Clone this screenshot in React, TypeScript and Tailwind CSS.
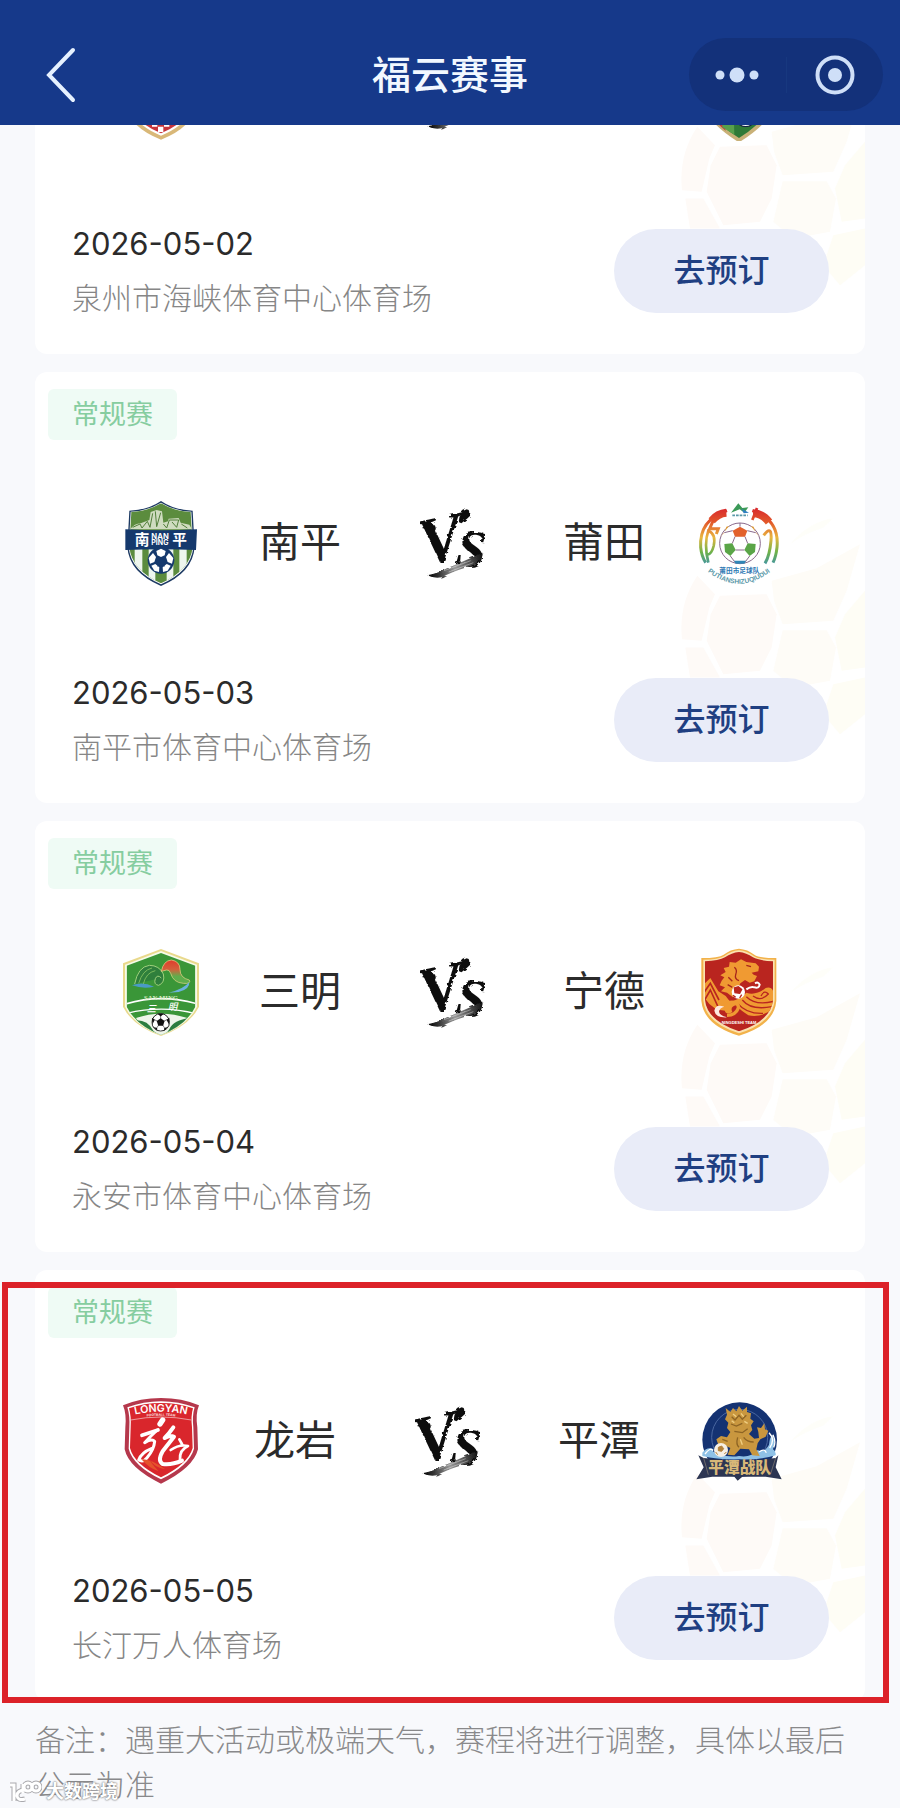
import React from 'react'
import { clsx } from 'clsx'

interface Team {
  name: string
  Logo: () => React.ReactElement
}

interface Match {
  date: string
  venue: string
  home: Team
  away: Team
  highlighted?: boolean
}

const matches: Match[] = [
  {
    date: '2026-05-02',
    venue: '泉州市海峡体育中心体育场',
    home: { name: '泉州', Logo: QuanzhouLogo },
    away: { name: '漳州', Logo: ZhangzhouLogo },
  },
  {
    date: '2026-05-03',
    venue: '南平市体育中心体育场',
    home: { name: '南平', Logo: NanpingLogo },
    away: { name: '莆田', Logo: PutianLogo },
  },
  {
    date: '2026-05-04',
    venue: '永安市体育中心体育场',
    home: { name: '三明', Logo: SanmingLogo },
    away: { name: '宁德', Logo: NingdeLogo },
  },
  {
    date: '2026-05-05',
    venue: '长汀万人体育场',
    home: { name: '龙岩', Logo: LongyanLogo },
    away: { name: '平潭', Logo: PingtanLogo },
    highlighted: true,
  },
]

export default function App() {
  return (
    <div className="relative min-h-screen bg-[#f8f9fc] font-['Inter','Noto_Sans_CJK_SC',sans-serif]">
      <Header />

      <main className="overflow-hidden px-[35px]">
        {/* List is scrolled, the first card sits partly under the header */}
        <div className="-mt-[202px] flex flex-col gap-[18px]">
          {matches.map((match) => (
            <MatchCard key={match.date} match={match} />
          ))}
        </div>
        <p className="pt-[17px] text-[30px] leading-[45px] font-light text-[#89898b]">
          备注：遇重大活动或极端天气，赛程将进行调整，具体以最后公示为准
        </p>
      </main>

      <Watermark />
    </div>
  )
}

// ── Header ──

function Header() {
  return (
    <header className="grid h-[125px] grid-cols-[1fr_auto_1fr] items-center bg-[#16398a] px-[17px] pt-6">
      <button type="button" aria-label="返回" className="ml-[25px] w-9">
        <svg viewBox="0 0 36 56" className="h-14 w-9" fill="none" stroke="#e6f1ff" strokeWidth="4">
          <path d="M31 3 7 28l24 25" strokeLinecap="round" />
        </svg>
      </button>
      <h1 className="text-[39px] leading-[50px] font-medium text-[#f2f8ff]">福云赛事</h1>
      <div className="flex h-[73px] w-[194px] items-center justify-self-end rounded-full bg-[#13317a]">
        <button type="button" aria-label="更多" className="flex h-9 flex-1 items-center justify-center border-r border-[#17387f]">
          <svg viewBox="0 0 48 20" className="h-5 w-12" fill="#cfdff8">
            <circle cx="7" cy="10" r="4.5" />
            <circle cx="24" cy="10" r="7.5" />
            <circle cx="41" cy="10" r="4.5" />
          </svg>
        </button>
        <button type="button" aria-label="关闭" className="flex flex-1 items-center justify-center">
          <svg viewBox="0 0 40 40" className="h-10 w-10">
            <circle cx="20" cy="20" r="17.5" fill="none" stroke="#cfdff8" strokeWidth="4" />
            <circle cx="20" cy="20" r="7" fill="#cfdff8" />
          </svg>
        </button>
      </div>
    </header>
  )
}

// ── Match card ──

function MatchCard({ match }: { match: Match }) {
  const { home, away } = match

  return (
    <article className="relative rounded-xl bg-white pb-[38px]">
      <BallPattern />

      <div className="relative pt-[17px] pl-[13px]">
        <span className="inline-flex h-[51px] items-center rounded-md bg-[#effbf5] px-6 pt-0.5 align-top text-[27px] text-[#86cda0]">
          常规赛
        </span>
      </div>

      <div className="relative mt-[57px] flex items-center px-[83px]">
        <home.Logo />
        <div
          className={clsx(
            'flex flex-1 items-center justify-between text-[41px] leading-[50px] text-[#2b2b2b]',
            match.highlighted ? 'pr-[56px] pl-[50px]' : 'pr-[51px] pl-[55px]'
          )}
        >
          <span className="pb-1">{home.name}</span>
          <VersusMark />
          <span className="pb-1">{away.name}</span>
        </div>
        <away.Logo />
      </div>

      <div className="relative mt-[85px] flex items-center justify-between pr-[36px] pl-[37px]">
        <div>
          <p className="text-[31px] leading-9 text-[#2b2b2b]">{match.date}</p>
          <p className="mt-[18px] text-[30px] leading-9 font-light text-[#868686]">{match.venue}</p>
        </div>
        <button
          type="button"
          className="h-[84px] w-[215px] rounded-full bg-[#e9ecf8] text-[32px] font-medium text-[#1f3f82]"
        >
          去预订
        </button>
      </div>

      {match.highlighted && (
        <div className="pointer-events-none absolute top-3 -right-6 -bottom-0.5 -left-[33px] border-[6px] border-[#dc2229]" />
      )}
    </article>
  )
}

function BallPattern() {
  return (
    <svg viewBox="60 100 555 740" className="absolute top-[142px] right-0 h-[247px] w-[185px]" aria-hidden="true">
      <g fill="#fefaf7">
        <path d="M112 285Q55 370 66 475L125 480 148 380 165 340Z" />
        <path d="M180 345 320 340 350 400 335 500 300 570 190 580 140 480 152 400Z" />
        <path d="M76 500 130 500 180 590 90 590Z" />
      </g>
      <g fill="#fefcf7">
        <path d="M335 300 470 262 600 190 560 330 520 420 368 430 342 360Z" />
        <path d="M368 448 500 448 528 500 510 600 400 620 340 570Z" />
      </g>
      <g fill="#fefdf5">
        <path d="M555 400 615 330 615 560 545 570 525 470Z" />
        <path d="M520 610 615 590 615 700 540 760 490 700Z" />
        <path d="M390 190Q450 120 520 112L490 140Q430 160 390 190Z" opacity=".6" />
      </g>
    </svg>
  )
}

function VersusMark() {
  return (
    <svg viewBox="60 80 195 225" className="h-[75px] w-[65px]" role="img" aria-label="VS">
      <defs>
        <filter id="ink" x="-10%" y="-10%" width="120%" height="120%">
          <feTurbulence type="fractalNoise" baseFrequency="0.05 0.1" numOctaves="2" seed="4" />
          <feDisplacementMap in="SourceGraphic" scale="12" />
        </filter>
        <linearGradient id="inkFade" x1="1" x2="0">
          <stop offset="0" stopColor="#111" />
          <stop offset=".5" stopColor="#999" />
          <stop offset=".8" stopColor="#333" />
          <stop offset="1" stopColor="#000" />
        </linearGradient>
      </defs>
      <g filter="url(#ink)" fill="#111">
        <text fontFamily="Liberation Serif, serif" fontWeight="700" fontStyle="italic">
          <tspan x="70" y="258" rotate="-12" fontSize="200">
            V
          </tspan>
          <tspan x="164" y="258" rotate="6" fontSize="160">
            S
          </tspan>
        </text>
        {/* brush tips and the tail under the mark */}
        <path d="M176 128Q178 96 200 90 214 92 210 110 200 120 184 132Z" />
        <path d="M66 146Q78 134 104 138 116 150 106 160 84 150 66 146Z" />
        <path d="M248 220Q250 248 200 264 150 280 126 294 100 298 82 288 116 282 142 266 190 246 248 220Z" fill="url(#inkFade)" />
      </g>
      <path d="M150 196 168 152M160 200 176 164M132 274 212 244M146 278 220 250" stroke="#fff" strokeWidth="2" opacity=".55" />
    </svg>
  )
}

// ── Team logos ──

function Crest({ viewBox, label, children }: { viewBox: string; label: string; children: React.ReactNode }) {
  return (
    <svg viewBox={viewBox} className="h-[93px] w-[86px] shrink-0" role="img" aria-label={label}>
      {children}
    </svg>
  )
}

function Football({ cx, cy, r, dark = '#111' }: { cx: number; cy: number; r: number; dark?: string }) {
  return (
    <svg x={cx - r} y={cy - r} width={r * 2} height={r * 2} viewBox="-50 -50 100 100">
      <circle r="47" fill="#fff" stroke={dark} strokeWidth="5" />
      <path d="M0-22 21-7 13 18-13 18-21-7Z" fill={dark} />
      <path d="M0-18V-34M17-6 33-14M11 15 21 30M-11 15-21 30M-17-6-33-14" stroke={dark} strokeWidth="3" />
      <path d="M-17-46 17-46 0-31ZM31-14 47-24 44 10ZM19 31 38 25 18 45ZM-19 31-38 25-18 45ZM-31-14-47-24-44 10Z" fill={dark} />
    </svg>
  )
}

function QuanzhouLogo() {
  return (
    <Crest viewBox="54 50 258 279" label="泉州">
      <path d="M75 90 183 56 291 90V210Q285 285 183 325 81 285 75 210Z" fill="#d9b878" />
      <path d="M85 98 183 66 281 98V208Q275 275 183 313 91 275 85 208Z" fill="#fff" />
      <path d="M91 102 183 73 275 102V206Q270 270 183 306 96 270 91 206Z" fill="#c8353b" />
      <path d="M140 270h16v16h16v-16h20v16h16v-16h16v-14H140ZM174 286h16v16h-16Z" fill="#fff" />
    </Crest>
  )
}

function ZhangzhouLogo() {
  return (
    <Crest viewBox="111 42 258 279" label="漳州">
      <path d="M130 90 240 56 350 90V210Q330 270 240 325 150 270 130 210Z" fill="#c9b178" />
      <path d="M142 98 240 68 338 98V208Q320 262 240 312 160 262 142 208Z" fill="#2f7a37" />
      <path d="M142 98 180 86 200 290Q155 255 142 208Z" fill="#c23b3b" />
      <path d="M185 84 220 74 226 302 190 280Z" fill="#58a04c" />
      <Football cx={260} cy={246} r={34} dark="#14233f" />
    </Crest>
  )
}

function NanpingLogo() {
  return (
    <Crest viewBox="54 49 258 279" label="南平">
      <defs>
        <clipPath id="nanpingShield">
          <path d="M183 68Q222 92 272 94L278 200Q270 270 183 308 96 270 88 200L94 94Q144 92 183 68Z" />
        </clipPath>
      </defs>
      <path d="M183 61Q222 88 278 90L284 200Q278 276 183 316 88 276 82 200L88 90Q144 88 183 61Z" fill="#1d3a63" />
      <path d="M183 66Q222 91 274 93L280 200Q273 272 183 311 93 272 86 200L92 93Q144 91 183 66Z" fill="#fff" />
      <g clipPath="url(#nanpingShield)">
        <path d="M80 60h210v260H80Z" fill="#5b8c3e" />
        <path d="M104 200h23v120h-23ZM146 200h20v120h-20ZM200 200h20v120h-20ZM238 200h22v120h-22Z" fill="#eef6ee" />
        <path d="M90 146Q104 128 122 128L148 118 152 94 170 88 186 92 190 126 204 122 206 114 236 112 242 126 268 132 276 146Z" fill="#cfdcc0" />
        <path d="M98 140 120 130 126 142 142 122 150 140 158 98M166 92 170 138 182 96M190 130 200 142 208 118 236 118 230 140 216 124M244 130 262 142" fill="none" stroke="#527f3b" strokeWidth="3" />
      </g>
      <path d="M76 146Q183 152 291 146L288 208Q183 204 76 208Z" fill="#15396d" />
      <g fill="#fff" fontFamily="Noto Sans CJK SC, sans-serif" fontWeight="700">
        <text x="104" y="193" fontSize="44">南</text>
        <text x="217" y="193" fontSize="44">平</text>
        <g fontFamily="Inter, sans-serif">
          <text x="154" y="176" fontSize="23">NAN</text>
          <text x="154" y="194" fontSize="21">PING</text>
        </g>
      </g>
      <circle cx="183" cy="239" r="40" fill="#15396d" />
      <g fill="#fff">
        <path d="M183 204 197 211 194 224 183 229 172 224 169 211Z" />
        <path d="M207 217 220 232 216 249 203 244 198 229Z" />
        <path d="M159 217 146 232 150 249 163 244 168 229Z" />
        <path d="M200 250 212 255 203 270 189 274 188 260Z" />
        <path d="M166 250 154 255 163 270 177 274 178 260Z" />
        <path d="M183 229 189 239 200 240 192 248 194 258 183 253 172 258 174 248 166 240 177 239Z" fill="#15396d" />
      </g>
    </Crest>
  )
}

function PutianLogo() {
  return (
    <Crest viewBox="891 49 258 279" label="莆田">
      <defs>
        <linearGradient id="putianRainbow" x1="0" y1="80" x2="0" y2="260" gradientUnits="userSpaceOnUse">
          <stop offset="0" stopColor="#d8262d" />
          <stop offset=".25" stopColor="#e2582a" />
          <stop offset=".5" stopColor="#e9b640" />
          <stop offset=".75" stopColor="#6db24a" />
          <stop offset="1" stopColor="#3a8fb5" />
        </linearGradient>
        <path id="putianCurve" d="M910 260Q1020 358 1130 260" />
      </defs>
      <g fill="none" stroke="url(#putianRainbow)">
        <path d="M984 90Q900 118 905 200 908 228 920 246" strokeWidth="9" />
        <path d="M982 96Q956 98 938 120" strokeWidth="24" />
        <path d="M944 116 932 144 958 144 952 160" strokeWidth="9" />
        <path d="M928 246Q914 190 928 150 952 160 944 196 938 220 926 222" strokeWidth="8" />
        <path d="M1060 90Q1142 118 1134 200 1131 228 1122 246" strokeWidth="9" />
        <path d="M1062 98Q1090 98 1110 124" strokeWidth="24" />
        <path d="M1074 82 1060 118" strokeWidth="8" />
        <path d="M1094 164Q1120 130 1116 180 1112 226 1098 248" strokeWidth="9" />
      </g>
      <path d="M996 96 1018 68 1030 82 1048 80 1036 96 1022 86Z" fill="#3c9a58" />
      <path d="M1028 84 1050 96 1034 98Z" fill="#2f7fc1" />
      <path d="M1000 104h46" stroke="#5a98a8" strokeWidth="5" strokeDasharray="8 3" />
      <circle cx="1023" cy="188" r="61" fill="#fff" stroke="#8a6a8c" strokeWidth="3" />
      <path d="M1023 138 1045 150 1038 168 1008 168 1001 150Z" fill="#e2612c" />
      <path d="M976 190 1000 188 1010 208 994 226 978 214Z" fill="#5aa547" />
      <path d="M1070 190 1046 188 1036 208 1052 226 1068 214Z" fill="#5aa547" />
      <path d="M1004 240 1042 240 1036 249 1010 249Z" fill="#2f86b7" />
      <path d="M964 170 976 156 982 138 990 136ZM1082 170 1070 156 1064 138 1056 136Z" fill="#e5a23a" />
      <path
        d="M1023 127V138M1001 150 976 156M1045 150 1070 156M1008 168 1000 188M1038 168 1046 188M1010 208H1036M994 226 1006 242M1052 226 1040 242"
        stroke="#8a6a8c"
        strokeWidth="3"
      />
      <text x="1021" y="278" textAnchor="middle" fontSize="20" fontWeight="700" fontFamily="Noto Sans CJK SC, sans-serif" fill="#2d78b3">
        莆田市足球队
      </text>
      <text fontSize="20" fontWeight="700" fontFamily="Liberation Sans, sans-serif" fill="#5a98a8">
        <textPath href="#putianCurve" startOffset="50%" textAnchor="middle">
          PUTIANSHIZUQIUDUI
        </textPath>
      </text>
    </Crest>
  )
}

function SanmingLogo() {
  return (
    <Crest viewBox="54 46 258 279" label="三明">
      <defs>
        <clipPath id="sanmingShield">
          <path d="M183 67 286 105V228Q260 282 183 313 106 282 80 228V105Z" />
        </clipPath>
        <linearGradient id="sanmingPeak" x1="0" y1="0" x2="0" y2="1">
          <stop offset="0" stopColor="#e03c2c" />
          <stop offset=".4" stopColor="#d4603c" />
          <stop offset=".7" stopColor="#5fae4c" />
        </linearGradient>
      </defs>
      <path d="M183 55 297 98V228Q268 286 183 316 98 286 69 228V98Z" fill="#e9d98c" />
      <path d="M183 61 291 102V228Q264 284 183 314 102 284 75 228V102Z" fill="#f6fbe8" />
      <g clipPath="url(#sanmingShield)">
        <path d="M70 50h230v270H70Z" fill="#3a9638" />
        <path d="M104 160Q114 108 148 104 178 104 190 130 196 156 176 164 160 162 166 144 172 130 184 142" fill="#2f7f3c" stroke="#9fd07c" strokeWidth="3" />
        <path d="M116 158Q128 118 156 112M130 160Q138 126 166 120" fill="none" stroke="#79b95c" strokeWidth="3" />
        <path d="M96 164Q128 152 162 168 130 176 96 164Z" fill="#4a9ac6" />
        <path d="M184 122Q190 90 214 88 240 92 240 116 240 142 268 148 274 160 250 158 220 156 212 128 208 116 200 118Z" fill="url(#sanmingPeak)" stroke="#f0d98e" strokeWidth="2" />
        <path d="M206 186Q250 176 268 154 270 176 236 184Z" fill="#6bb2dc" />
        <path d="M70 222Q183 186 300 222" fill="none" stroke="#fff" strokeWidth="5" />
        <path d="M80 248Q190 222 290 250" fill="none" stroke="#fff" strokeWidth="4" />
        <path d="M108 262Q183 236 262 262L240 290 183 316 126 290Z" fill="#eef5ea" />
        <path d="M96 270Q140 262 160 300L183 320H100ZM270 262Q220 268 208 296L190 320H280Z" fill="#2c7d3f" />
      </g>
      <text x="183" y="209" textAnchor="middle" fontSize="20" fontFamily="Liberation Serif, serif" fontWeight="700" fill="#d9edc4">
        SAN MING
      </text>
      <g fontFamily="Noto Sans CJK SC, sans-serif" fontWeight="500" fontStyle="italic" fontSize="28" fill="#fff">
        <text x="140" y="243">三</text>
        <text x="204" y="239">明</text>
      </g>
      <Football cx={182} cy={275} r={28} />
    </Crest>
  )
}

function NingdeLogo() {
  return (
    <Crest viewBox="111 46 258 279" label="宁德">
      <defs>
        <clipPath id="ningdeShield">
          <path d="M240 64Q262 66 282 80 300 90 342 92V208Q336 270 240 302 144 270 138 208V92Q180 90 198 80 218 66 240 64Z" />
        </clipPath>
      </defs>
      <path d="M240 54Q266 56 286 72 300 82 352 82V210Q346 284 240 315 134 284 127 210V82Q180 82 194 72 214 56 240 54Z" fill="#f2b24a" />
      <path d="M240 59Q264 61 284 76 300 87 347 87V209Q341 276 240 308 139 276 133 209V87Q180 87 196 76 216 61 240 59Z" fill="#fbe2b0" />
      <g clipPath="url(#ningdeShield)">
        <path d="M120 50h240v270H120Z" fill="#b9251f" />
        <path d="M136 200V160L154 142 178 182 200 196 214 214 200 240Q160 240 136 200Z" fill="#f09a32" />
        <path d="M136 184 154 158 180 208M138 206 154 178 176 226" fill="none" stroke="#b9251f" strokeWidth="5" />
        <path
          d="M188 150 196 140 184 134 200 124 194 112 210 108 212 94 230 96 246 86 262 94 290 98 300 108 298 122 278 126 284 132 294 136 286 152 272 156 258 148 244 158 236 176 222 200 204 186 186 182 198 170 182 164Z"
          fill="#f09a32"
        />
        <path d="M226 110Q236 118 230 132 226 146 240 150M262 104l14 4M208 140l12 12M206 162l14 8" fill="none" stroke="#a8261c" strokeWidth="4" />
        <path d="M196 218Q240 210 262 186 290 196 320 172 344 164 346 200V232Q310 262 268 254 240 236 232 224 212 228 220 244 200 256 196 236Z" fill="#f09a32" />
        <path d="M250 208Q276 240 338 228M262 198Q290 226 344 212M282 196Q306 214 328 190 316 176 306 196M236 218Q262 250 312 248" fill="none" stroke="#b9251f" strokeWidth="4" />
        <path d="M206 216Q240 210 238 232 230 254 204 254" fill="none" stroke="#f09a32" strokeWidth="10" />
        <path d="M196 228Q170 218 166 240 170 262 204 260 180 254 180 242 182 232 196 228Z" fill="#fde8e0" />
      </g>
      <circle cx="238" cy="184" r="20" fill="#fff" />
      <path d="M226 172 238 168 248 176 242 188 228 186ZM222 194 230 200M248 192 242 202" fill="#b9251f" stroke="#b9251f" strokeWidth="4" />
      <path d="M262 176Q276 166 286 170 300 174 302 162 298 152 288 158" fill="none" stroke="#fff" strokeWidth="6" />
      <text x="240" y="279" textAnchor="middle" fontSize="12" fontWeight="700" fontFamily="Liberation Sans, sans-serif" fill="#fff">
        NINGDESHI TEAM
      </text>
    </Crest>
  )
}

function LongyanLogo() {
  return (
    <Crest viewBox="54 43 258 279" label="龙岩">
      <defs>
        <path id="longyanTop" d="M92 105Q183 81 274 105" />
        <path id="longyanSub" d="M110 112Q183 98 256 112" />
      </defs>
      <path d="M69 74Q120 52 183 52 246 52 297 74 286 100 292 140L294 206Q280 262 183 309 86 262 74 206L76 140Q80 100 69 74Z" fill="#b5384c" />
      <path d="M82 80Q130 62 183 62 236 62 284 80 276 106 280 140L282 204Q268 254 183 296 98 254 86 204L88 140Q90 106 82 80Z" fill="#fff" />
      <path d="M87 83Q132 67 183 67 234 67 279 83 272 106 276 140L278 202Q264 250 183 290 102 250 90 202L92 140Q94 106 87 83Z" fill="#d9262c" />
      <path d="M92 118Q183 100 274 118" fill="none" stroke="#f6d5d5" strokeWidth="2" />
      <text fontSize="32" fontWeight="600" fontFamily="Inter, sans-serif" fill="#fff">
        <textPath href="#longyanTop" startOffset="50%" textAnchor="middle">
          LONGYAN
        </textPath>
      </text>
      <text fontSize="10" fontWeight="700" fontFamily="Liberation Sans, sans-serif" fill="#fbe3e3">
        <textPath href="#longyanSub" startOffset="50%" textAnchor="middle">
          FOOTBALL TEAM
        </textPath>
      </text>
      {/* dragon in brush strokes */}
      <g fill="none" stroke="#fff" strokeLinecap="round" strokeLinejoin="round">
        <path d="M188 118 180 130" strokeWidth="16" />
        <path d="M126 164 174 148" strokeWidth="11" />
        <path d="M172 148Q150 168 134 186 156 172 164 182 162 206 142 230 130 246 116 238 124 216 154 204" strokeWidth="9" />
        <path d="M220 140Q206 160 194 172 210 162 222 168 208 186 188 212 172 240 188 250 214 254 246 240" strokeWidth="12" />
        <path d="M238 176 246 190M212 208Q238 190 264 196 238 208 240 236" strokeWidth="8" />
      </g>
      <path d="M124 236Q146 262 176 272 150 244 150 238 162 260 196 266 150 232 124 236Z" fill="#e5532c" />
    </Crest>
  )
}

function PingtanLogo() {
  return (
    <Crest viewBox="111 73 258 279" label="平潭">
      <circle cx="242" cy="207" r="112" fill="#143272" />
      <circle cx="242" cy="200" r="84" fill="none" stroke="#4a67a0" strokeWidth="3" />
      <path d="M130 246Q146 226 164 236 156 244 176 248 210 262 240 256 276 262 296 238 316 248 330 222 332 200 340 192 350 212 342 236 352 242 350 254 300 268 242 266 180 268 130 256Z" fill="#8fc1e6" />
      <path d="M330 186Q350 206 332 232M342 192Q352 214 344 230M138 250Q154 228 162 240M300 244Q316 232 322 246" fill="none" stroke="#fff" strokeWidth="4" />
      <path
        d="M204 132 200 112 214 124 222 112 232 122 240 106 250 120 264 108 264 124 276 128 274 144 284 152 276 164 280 178 270 190 286 204 300 202 298 184 294 170 306 172 316 158 318 176 328 180 320 198 304 206 296 218 292 236 302 256 280 254 270 236 244 234 226 254 206 252 214 232 196 224 178 222 172 206 186 196 204 200 214 184 204 172 208 156 198 146Z"
        fill="#c9973f"
      />
      <path d="M218 138 228 148 240 134 250 146 262 134M216 160 232 166 250 158M226 182 250 186 266 174M236 200Q230 222 240 230M254 200Q264 214 284 214M190 206 206 212" fill="none" stroke="#8d6424" strokeWidth="4" />
      <path d="M222 130 232 138M246 128 254 138M218 150 226 156M256 152 266 158M244 206 250 222" stroke="#f0cf82" strokeWidth="4" />
      <circle cx="186" cy="238" r="21" fill="#f6efe4" />
      <path d="M178 230 188 226 194 234 188 242 178 240ZM170 244 176 252M196 250 202 244" fill="#b3813a" stroke="#b3813a" strokeWidth="3" />
      <path d="M118 254 134 262Q240 276 350 262L358 254 350 290 368 326 320 318 250 318 236 330 226 318 160 318 112 326 134 290Z" fill="#2c3552" />
      <path d="M134 262 148 312M350 262 334 312" stroke="#6c6a6c" strokeWidth="3" />
      <text
        x="242"
        y="306"
        textAnchor="middle"
        fontSize="47"
        fontWeight="900"
        fontFamily="Noto Sans CJK SC, sans-serif"
        fill="#d8b878"
      >
        平潭战队
      </text>
    </Crest>
  )
}

// ── Watermark ──

function Watermark() {
  return (
    <div className="absolute bottom-1 left-2 flex items-center gap-1">
      <svg viewBox="0 0 34 24" className="h-6 w-[34px]" fill="none">
        <g stroke="#a9a9ad" strokeWidth="5">
          <path d="M2 5h4v16M17 10Q9 10 9 16 10 21 17 19M15 4v9" />
          <circle cx="20" cy="7" r="4" />
          <circle cx="28" cy="7" r="4" />
        </g>
        <g stroke="#fff" strokeWidth="3">
          <path d="M2 5h4v16M17 10Q9 10 9 16 10 21 17 19M15 4v9" />
          <circle cx="20" cy="7" r="4" />
          <circle cx="28" cy="7" r="4" />
        </g>
      </svg>
      <span className="text-lg leading-6 font-bold text-white [text-shadow:0_0_2px_#808084,0_0_2px_#808084]">大数跨境</span>
    </div>
  )
}
